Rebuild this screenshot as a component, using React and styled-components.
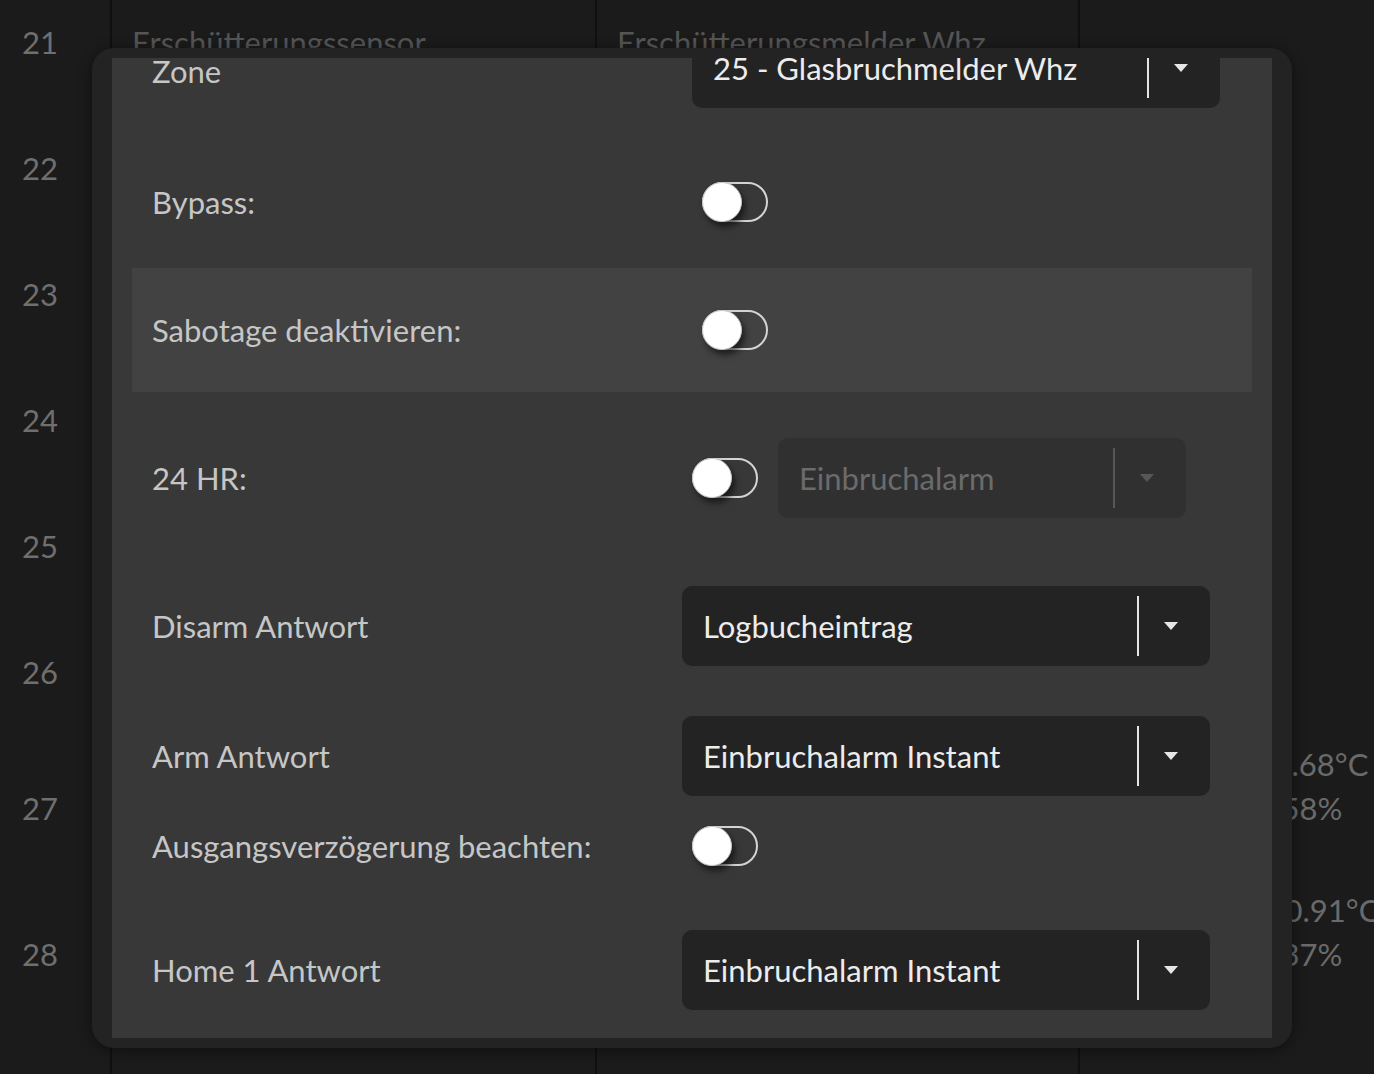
import React from "react";
import styled, { createGlobalStyle } from "styled-components";

const GlobalStyle = createGlobalStyle`
  html, body {
    margin: 0;
    padding: 0;
    background: #1b1b1b;
    overflow: hidden;
    font-family: Lato, "Noto Sans", sans-serif;
  }
  * { box-sizing: border-box; }
`;

const tableRows = [
  { n: 21, h: 126, a: "Erschütterungssensor", b: "Erschütterungsmelder Whz" },
  { n: 22, h: 126, a: "Glasbruchsensor", b: "Glasbruchmelder Whz" },
  { n: 23, h: 126, a: "Bewegungsmelder", b: "Bewegungsmelder Flur" },
  { n: 24, h: 126, a: "Türkontakt", b: "Haustür" },
  { n: 25, h: 126, a: "Türkontakt", b: "Terrassentür" },
  { n: 26, h: 126, a: "Rauchmelder", b: "Rauchmelder Küche" },
  { n: 27, h: 146, a: "Temperatursensor", b: "Klima Whz", c: ["21.68°C", "58%"] },
  { n: 28, h: 146, a: "Temperatursensor", b: "Klima Bad", c: ["20.91°C", "37%"], off: 22 },
  { n: "", h: 126, a: "", b: "" },
];

const Page = styled.div`
  position: relative;
  width: 1374px;
  height: 1074px;
  overflow: hidden;
`;

const Table = styled.div`
  margin-top: -21px;
  width: 1544px;
`;

const TableRow = styled.div`
  display: grid;
  grid-template-columns: 110px 485px 483px 466px;
  height: ${(p) => p.$h}px;
`;

const NumCell = styled.div`
  display: flex;
  align-items: center;
  padding-left: 22px;
  font-size: 31px;
  color: #6f6f6f;
`;

const TextCell = styled.div`
  display: flex;
  align-items: center;
  border-left: 2px solid #101010;
  padding-left: 20px;
  font-size: 31px;
  color: #555;
  white-space: nowrap;
  overflow: hidden;
`;

const ValueCell = styled.div`
  border-left: 2px solid #101010;
  padding-top: 7px;
  text-align: center;
  font-size: 31px;
  line-height: 44px;
  color: #6a6a6a;
`;

const ValueLine = styled.div`
  padding-left: ${(p) => p.$off || 0}px;
`;

const Modal = styled.div`
  position: absolute;
  left: 92px;
  top: 48px;
  width: 1200px;
  height: 1000px;
  padding: 10px 20px;
  background: #232323;
  border-radius: 22px;
  box-shadow: 0 2px 14px rgba(0, 0, 0, 0.45);
`;

const Panel = styled.div`
  height: 100%;
  background: #383838;
  overflow: hidden;
`;

const Form = styled.div`
  margin-top: -58px;
  display: flex;
  flex-direction: column;
`;

const Row = styled.div`
  display: flex;
  align-items: center;
  height: ${(p) => p.$h}px;
  margin: 0 20px;
  padding-left: 20px;
  background: ${(p) => (p.$active ? "#424242" : "transparent")};
`;

const Label = styled.div`
  flex: 0 0 ${(p) => (p.$shift ? 540 : 530)}px;
  font-size: 31px;
  color: #c6c6c6;
  padding-top: ${(p) => p.$drop || 0}px;
  white-space: nowrap;
`;

const Controls = styled.div`
  display: flex;
  align-items: center;
  gap: 20px;
`;

const Track = styled.div`
  position: relative;
  width: 66px;
  height: 40px;
  margin-left: 10px;
  border: 2px solid #d4d4d4;
  border-radius: 20px;
`;

const Knob = styled.div`
  position: absolute;
  left: -2px;
  top: -2px;
  width: 40px;
  height: 40px;
  border-radius: 50%;
  background: #fff;
  border: 1px solid #c9c4bc;
  box-shadow: 3px 5px 6px rgba(0, 0, 0, 0.55);
`;

const SelectBox = styled.div`
  display: flex;
  align-items: center;
  width: ${(p) => p.$w}px;
  height: 80px;
  padding: 0 7px 0 21px;
  border-radius: 10px;
  background: ${(p) => (p.$disabled ? "#303030" : "#232323")};
`;

const SelectValue = styled.span`
  flex: 1;
  font-size: 31px;
  color: ${(p) => (p.$disabled ? "#6b6b6b" : "#ececec")};
  white-space: nowrap;
`;

const Divider = styled.span`
  width: 2px;
  height: 60px;
  background: ${(p) => (p.$disabled ? "#575757" : "#e4e4e4")};
`;

const CaretBox = styled.span`
  width: 64px;
  display: flex;
  justify-content: center;
`;

const Caret = styled.span`
  width: 0;
  height: 0;
  border-left: 7px solid transparent;
  border-right: 7px solid transparent;
  border-top: 8px solid ${(p) => (p.$disabled ? "#575757" : "#e6e6e6")};
`;

const Toggle = () => (
  <Track>
    <Knob />
  </Track>
);

const Select = ({ value, w = 528, disabled }) => (
  <SelectBox $w={w} $disabled={disabled}>
    <SelectValue $disabled={disabled}>{value}</SelectValue>
    <Divider $disabled={disabled} />
    <CaretBox>
      <Caret $disabled={disabled} />
    </CaretBox>
  </SelectBox>
);

export default function App() {
  return (
    <Page>
      <GlobalStyle />
      <Table>
        {tableRows.map((r, i) => (
          <TableRow key={i} $h={r.h}>
            <NumCell>{r.n}</NumCell>
            <TextCell>{r.a}</TextCell>
            <TextCell>{r.b}</TextCell>
            <ValueCell>
              {(r.c || []).map((v, j) => (
                <ValueLine key={v} $off={j === 0 ? r.off : 0}>
                  {v}
                </ValueLine>
              ))}
            </ValueCell>
          </TableRow>
        ))}
      </Table>

      <Modal>
        <Panel>
          <Form>
            <Row $h={136}>
              <Label $shift $drop={6}>Zone</Label>
              <Select value="25 - Glasbruchmelder Whz" />
            </Row>
            <Row $h={132}>
              <Label $shift>Bypass:</Label>
              <Toggle />
            </Row>
            <Row $h={124} $active>
              <Label $shift>Sabotage deaktivieren:</Label>
              <Toggle />
            </Row>
            <Row $h={172}>
              <Label>24 HR:</Label>
              <Controls>
                <Toggle />
                <Select value="Einbruchalarm" w={408} disabled />
              </Controls>
            </Row>
            <Row $h={124}>
              <Label>Disarm Antwort</Label>
              <Select value="Logbucheintrag" />
            </Row>
            <Row $h={136}>
              <Label>Arm Antwort</Label>
              <Select value="Einbruchalarm Instant" />
            </Row>
            <Row $h={44}>
              <Label>Ausgangsverzögerung beachten:</Label>
              <Toggle />
            </Row>
            <Row $h={204}>
              <Label>Home 1 Antwort</Label>
              <Select value="Einbruchalarm Instant" />
            </Row>
          </Form>
        </Panel>
      </Modal>
    </Page>
  );
}
